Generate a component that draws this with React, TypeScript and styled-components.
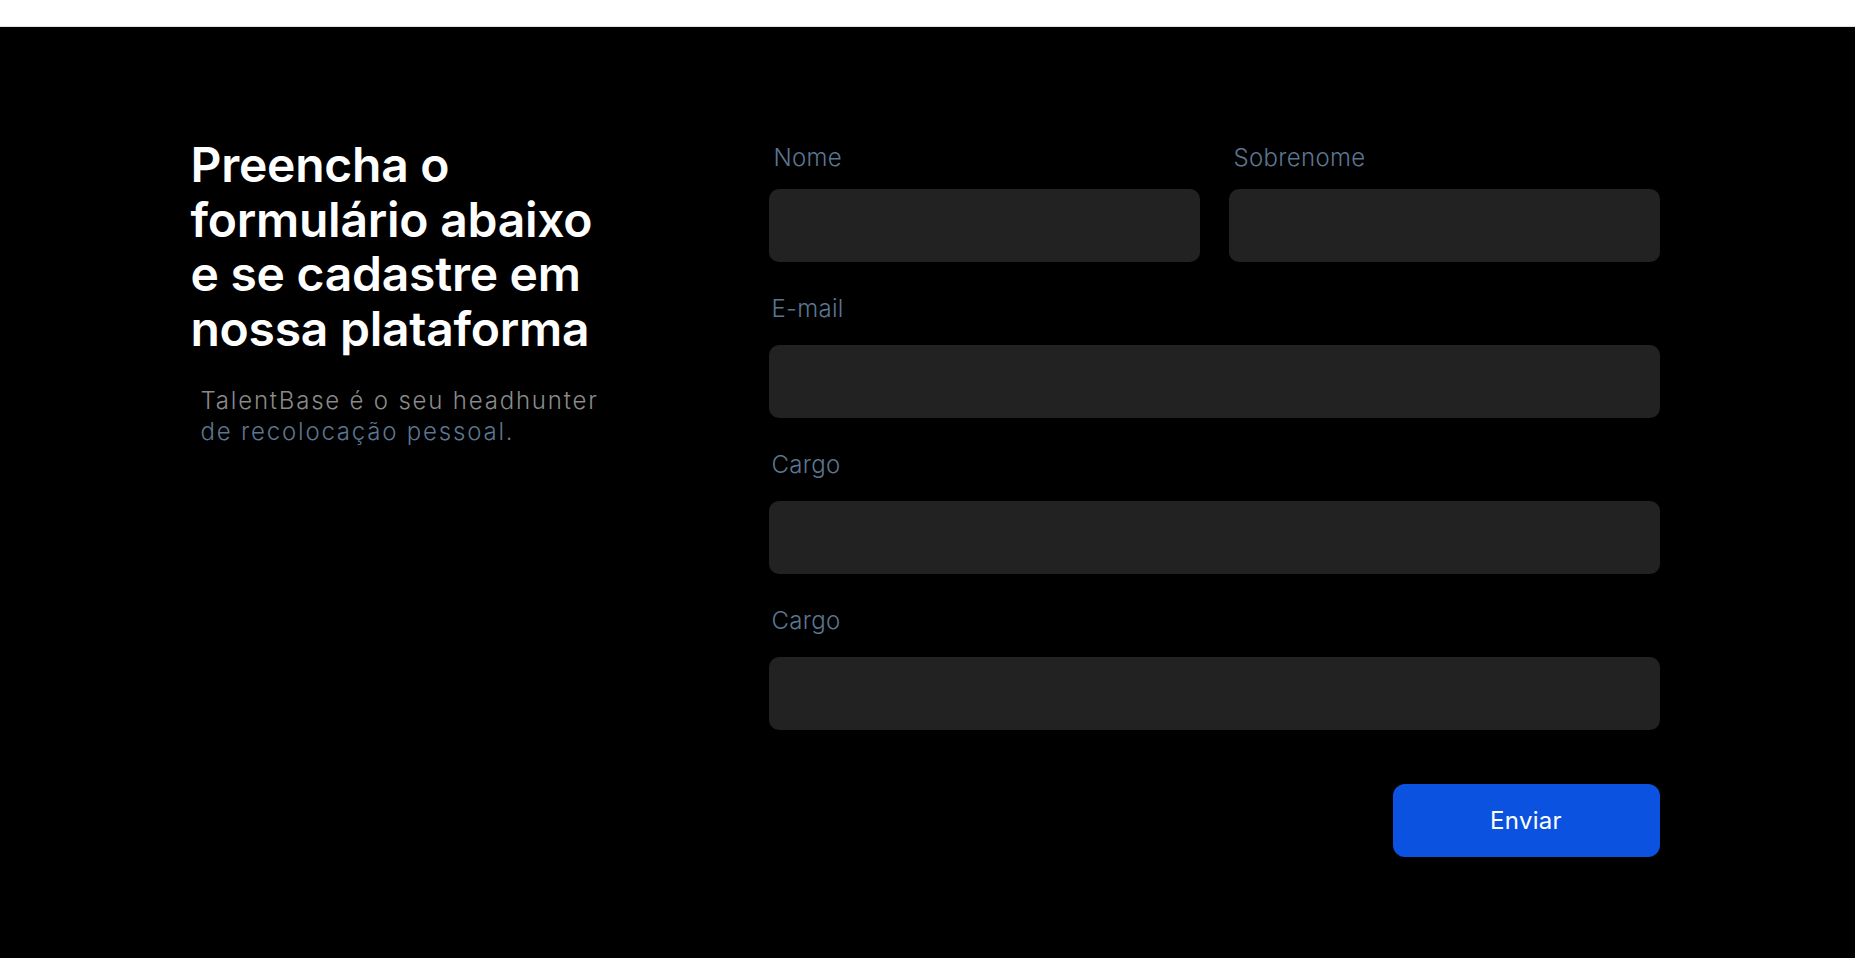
import React from "react";
import styled, { createGlobalStyle } from "styled-components";

const GlobalStyle = createGlobalStyle`
  * { box-sizing: border-box; }
  html, body { margin: 0; padding: 0; background: #ffffff; }
  body { font-family: Inter, "Noto Sans", Arial, sans-serif; }
`;

const TopBar = styled.header`
  height: 27px;
  background: #ffffff;
  border-bottom: 1px solid #e2e2e2;
`;

const Main = styled.main`
  background: #000000;
  min-height: calc(100vh - 27px);
  padding-top: 107px;
`;

const Container = styled.div`
  width: 1468px;
  margin: 0 auto;
  padding-right: 2px;
  display: flex;
  justify-content: space-between;
  align-items: flex-start;
`;

const Intro = styled.section`
  width: 440px;
  margin-left: -3px;
  padding-top: 4px;
  display: flex;
  flex-direction: column;
`;

const Heading = styled.h1`
  margin: 0;
  color: #ffffff;
  font-family: Inter, sans-serif;
  font-weight: 600;
  font-size: 48px;
  line-height: 54.5px;
  letter-spacing: -0.25px;
`;

const Subtitle = styled.p`
  margin: 29px 0 0 10px;
  font-family: Inter, sans-serif;
  font-weight: 300;
  font-size: 24px;
  line-height: 31px;
  letter-spacing: 1.8px;
`;

const SubLine = styled.span<{ $tone: "gray" | "slate" }>`
  display: block;
  color: ${(p) => (p.$tone === "gray" ? "#8a8a8a" : "#5b7691")};
`;

const Form = styled.form`
  width: 891px;
  padding-top: 10px;
  display: flex;
  flex-direction: column;
  gap: 33px;
`;

const Row = styled.div`
  display: grid;
  grid-template-columns: 1fr 1fr;
  column-gap: 29px;
`;

const Field = styled.label<{ $tight?: boolean }>`
  display: flex;
  flex-direction: column;
  gap: ${(p) => (p.$tight ? "18px" : "23px")};
`;

const Label = styled.span`
  display: block;
  padding-left: 3px;
  color: #5b7691;
  font-family: Inter, sans-serif;
  font-weight: 300;
  font-size: 24px;
  line-height: 27px;
  letter-spacing: 0.3px;
`;

const TightLabel = styled(Label)`
  padding-left: 5px;
`;

const Input = styled.input`
  height: 73px;
  width: 100%;
  border: none;
  outline: none;
  border-radius: 10px;
  background: #222222;
  color: #ffffff;
  padding: 0 20px;
  font-family: Inter, sans-serif;
  font-size: 20px;
`;

const Actions = styled.div`
  display: flex;
  justify-content: flex-end;
  padding-top: 21px;
`;

const SubmitButton = styled.button`
  width: 267px;
  height: 73px;
  border: none;
  border-radius: 12px;
  background: #0b52e0;
  color: #ffffff;
  font-family: Inter, sans-serif;
  font-weight: 400;
  font-size: 24px;
  letter-spacing: 0.3px;
  cursor: pointer;
`;

export default function App() {
  return (
    <>
      <GlobalStyle />
      <TopBar />
      <Main>
        <Container>
          <Intro>
            <Heading>
              Preencha o<br />
              formulário abaixo<br />
              e se cadastre em<br />
              nossa plataforma
            </Heading>
            <Subtitle>
              <SubLine $tone="gray">TalentBase é o seu headhunter</SubLine>
              <SubLine $tone="slate">de recolocação pessoal.</SubLine>
            </Subtitle>
          </Intro>
          <Form onSubmit={(e) => e.preventDefault()}>
            <Row>
              <Field $tight>
                <TightLabel>Nome</TightLabel>
                <Input type="text" />
              </Field>
              <Field $tight>
                <TightLabel>Sobrenome</TightLabel>
                <Input type="text" />
              </Field>
            </Row>
            <Field>
              <Label>E-mail</Label>
              <Input type="email" />
            </Field>
            <Field>
              <Label>Cargo</Label>
              <Input type="text" />
            </Field>
            <Field>
              <Label>Cargo</Label>
              <Input type="text" />
            </Field>
            <Actions>
              <SubmitButton type="submit">Enviar</SubmitButton>
            </Actions>
          </Form>
        </Container>
      </Main>
    </>
  );
}
